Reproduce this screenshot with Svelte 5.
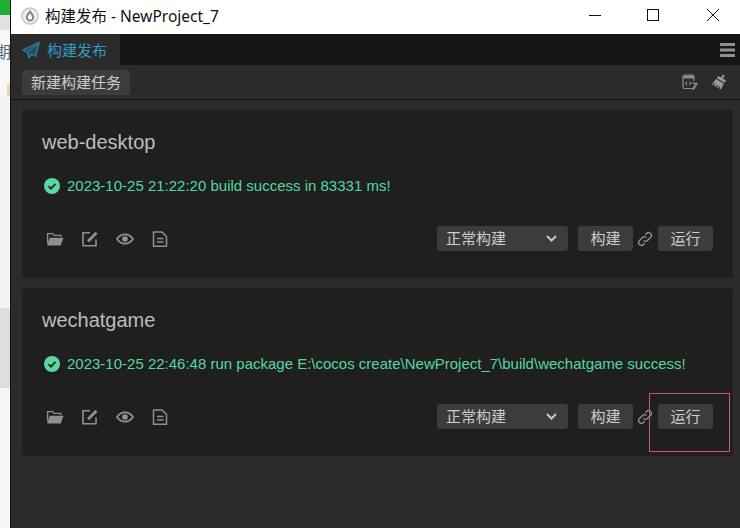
<script>
  const cards = [
    { name: 'web-desktop', msg: '2023-10-25 21:22:20 build success in 83331 ms!' },
    { name: 'wechatgame', msg: '2023-10-25 22:46:48 run package E:\\cocos create\\NewProject_7\\build\\wechatgame success!', marked: true }
  ];
</script>

<div class="screen">
  <aside class="strip">
    <div class="s-green"></div>
    <div class="s-grey1"></div>
    <div class="s-text"><span>期</span></div>
    <div class="s-tan"></div>
    <div class="s-light"></div>
    <div class="s-grey"></div>
    <div class="s-rest"></div>
  </aside>
  <main class="window">
    <header class="titlebar">
      <svg class="logo" width="18" height="18" viewBox="0 0 18 18">
        <circle cx="9" cy="9" r="8" fill="#efefef" stroke="#c4c4c4" stroke-width="1.500" />
        <path d="M9 2.800C7.300 5.500 4.800 7.500 4.800 10.400a4.200 4.200 0 0 0 8.400 0C13.200 7.500 10.700 5.500 9 2.800z" fill="#8a8a8a" />
        <path d="M9 6.500C8.100 8 6.900 9 6.900 10.500a2.100 2.100 0 0 0 4.200 0C11.100 9 9.900 8 9 6.500z" fill="#fff" />
      </svg>
      <span class="wintitle">构建发布 - NewProject_7</span>
      <div class="winctl">
        <svg width="14" height="14" viewBox="0 0 14 14"><path d="M1 7.500h12" stroke="#111" /></svg>
        <svg width="14" height="14" viewBox="0 0 14 14"><rect x="0.500" y="1.500" width="11" height="11" fill="none" stroke="#111" /></svg>
        <svg width="14" height="14" viewBox="0 0 14 14"><path d="M1 1l12 12M13 1L1 13" stroke="#111" /></svg>
      </div>
    </header>
    <nav class="tabs">
      <div class="tab">
        <svg width="18" height="18" viewBox="0 0 18 18"><path d="M17 1.500L1 9l4.500 2.300L7 16.500l2.700-3.500 3.800 2.200z" fill="#24495a" stroke="#2b7590" stroke-width="1.800" stroke-linejoin="round" /><path d="M16.500 2L6 11" stroke="#2b7590" stroke-width="1.500" /></svg>
        <span>构建发布</span>
      </div>
      <svg class="burger" width="15" height="14" viewBox="0 0 15 14"><path d="M0 0h15v3H0zM0 5.500h15v3H0zM0 11h15v3H0z" fill="#8f8f8f" /></svg>
    </nav>
    <div class="toolbar">
      <button class="btn new">新建构建任务</button>
      <div class="tools">
        <svg width="16" height="16" viewBox="0 0 16 16" fill="none" stroke="#8c8c8c" stroke-width="1.200">
          <path d="M10.500 14.500H2.500a1.500 1.500 0 0 1-1.500-1.500V3a2 2 0 0 1 2-2h7a2 2 0 0 1 2 2v4" />
          <path d="M1.500 3h10.500" stroke-width="3" />
          <path d="M5 7.500L3.700 9.200 5 10.900M7.500 7.500L8.800 9.200 7.500 10.900" />
          <path d="M15 9l-4.200 6.500" stroke-width="2.200" />
          <path d="M10.500 9l4.800 1" stroke-width="1.600" />
        </svg>
        <svg width="17" height="17" viewBox="0 0 17 17" fill="#999">
          <path d="M11.800 0.500l1.900 1.100-1.800 3.100 3.100 1.800-1.300 2.300-7.900-4.600 1.300-2.300 3 1.700z" />
          <path d="M4.900 5l8 4.600-3 5.900-1.700-1 .9-2-.9-.5-1.100 2-1.400-.8 1.100-2-.9-.5-1.100 2-1.500-.9 1-2-.9-.5-1.200 1.900-1.200-.8z" />
        </svg>
      </div>
    </div>
    <section class="content">
      {#each cards as card}
        <article class="card">
          <h2>{card.name}</h2>
          <p class="msg">
            <svg width="16" height="16" viewBox="0 0 16 16"><circle cx="8" cy="8" r="8" fill="#5dd6a0" /><path d="M4.500 8.200l2.400 2.400 4.600-4.800" fill="none" stroke="#1f2a26" stroke-width="1.800" /></svg>
            <span>{card.msg}</span>
          </p>
          <div class="actions">
            <div class="icons">
              <svg width="18" height="16" viewBox="0 0 18 16">
                <path d="M1.600 12V2.600h5l1.500 1.800h6.800V6" fill="none" stroke="#8f8f8f" stroke-width="1.400" />
                <path d="M1 14.500l2.800-7.700h13.700l-2.800 7.700z" fill="#8f8f8f" />
              </svg>
              <svg width="16" height="16" viewBox="0 0 16 16" fill="none" stroke="#909090" stroke-width="1.600">
                <path d="M8 1.800H1v13h13V8.500" /><path d="M6 10.200L14.500 1.800" stroke-width="2.800" />
              </svg>
              <svg width="18" height="16" viewBox="0 0 18 16">
                <path d="M1 8c2-3 4.800-4.600 8-4.600S15 5 17 8c-2 3-4.800 4.600-8 4.600S3 11 1 8z" fill="none" stroke="#959595" stroke-width="1.600" />
                <circle cx="9" cy="8" r="2.800" fill="#959595" />
              </svg>
              <svg width="16" height="16" viewBox="0 0 16 16" fill="none" stroke="#909090" stroke-width="1.500">
                <path d="M1.500 1h8.500l4.500 4.500v9.800H1.500z" stroke-linejoin="round" /><path d="M5 7.500h6.500M5 11h6.500" />
              </svg>
            </div>
            <div class="controls">
              <div class="select"><span>正常构建</span>
                <svg width="11" height="7" viewBox="0 0 11 7"><path d="M1 1l4.500 4.500L10 1" fill="none" stroke="#c8c8c8" stroke-width="2" /></svg>
              </div>
              <button class="btn act">构建</button>
              <svg class="link" width="16" height="16" viewBox="0 0 16 16" fill="none" stroke="#909090" stroke-width="1.400">
                <path d="M6.500 9.500a2.800 2.800 0 0 0 4 0l3-3a2.800 2.800 0 0 0-4-4L8.300 3.700" />
                <path d="M9.500 6.500a2.800 2.800 0 0 0-4 0l-3 3a2.800 2.800 0 0 0 4 4l1.200-1.200" />
              </svg>
              <button class="btn act">运行</button>
              {#if card.marked}<div class="mark"></div>{/if}
            </div>
          </div>
        </article>
      {/each}
    </section>
  </main>
</div>

<style>
  :global(body) { margin: 0; background: #2b2b2b; }
  .screen {
    display: flex;
    width: 740px;
    height: 528px;
    overflow: hidden;
    font-family: "Liberation Sans", "Noto Sans CJK SC", sans-serif;
  }
  .strip { width: 10px; display: flex; flex-direction: column; flex: none; overflow: hidden; background: #f2f2f2; }
  .s-green { height: 15px; background: #1fae2f; flex: none; }
  .s-grey1 { height: 15px; background: #e2e2e2; flex: none; }
  .s-text { height: 54px; background: #f7f7f7; flex: none; position: relative; overflow: hidden; }
  .s-text span { position: absolute; top: 12px; right: -1px; font-size: 16px; line-height: 22px; color: #4a6a80; }
  .s-tan { height: 12px; background: linear-gradient(90deg, #f7f7f7 75%, #e8d8a8 75%); flex: none; }
  .s-light { height: 212px; background: #f4f4f4; flex: none; }
  .s-grey { height: 80px; background: #dedede; flex: none; }
  .s-rest { flex: 1; background: #f6f6f6; }
  .window { flex: 1; display: flex; flex-direction: column; border-left: 1px solid #111; min-width: 0; background: #2b2b2b; }
  .titlebar { height: 34px; flex: none; background: #fff; display: flex; align-items: center; box-sizing: border-box; padding: 0 0 2px 10px; }
  .logo { margin-right: 6px; }
  .wintitle { font-size: 15.500px; color: #111; flex: 1; white-space: nowrap; font-family: "Noto Sans", "Noto Sans CJK SC", sans-serif; margin-bottom: 2px; }
  .winctl { display: flex; gap: 45px; margin: 0 20px 2px 0; }
  .winctl svg { display: block; }
  .tabs { height: 31px; flex: none; background: #151515; display: flex; justify-content: space-between; align-items: center; padding-right: 5px; }
  .tab { width: 109px; height: 31px; background: #2b2b2b; display: flex; align-items: center; gap: 7px; padding-left: 11px; box-sizing: border-box; color: #2e9cc9; font-size: 15px; }
  .toolbar { height: 35px; flex: none; box-sizing: border-box; border-bottom: 1px solid #111; display: flex; align-items: center; justify-content: space-between; padding: 0 12px 0 11px; }
  .tools { display: flex; gap: 13px; align-items: center; }
  .btn { border: 0; border-radius: 3px; background: #3c3c3c; color: #ccc; font: inherit; font-size: 15px; padding: 0 0 2px; box-sizing: border-box; }
  .new { width: 108px; height: 25px; }
  .content { flex: 1; padding: 10px 7px 0 11px; display: flex; flex-direction: column; gap: 10px; }
  .card { height: 168px; box-sizing: border-box; background: #1f1f1f; border-radius: 3px; padding: 19px 20px 0; display: flex; flex-direction: column; }
  h2 { margin: 0; font-size: 20px; font-weight: 400; color: #bdbdbd; line-height: 26px; }
  .msg { margin: 21px 0 0; display: flex; align-items: center; gap: 7px; padding-left: 2px; color: #55d7a0; font-size: 15px; line-height: 20px; white-space: nowrap; }
  .actions { margin-top: 30px; display: flex; justify-content: space-between; align-items: center; }
  .icons { display: flex; gap: 18px; margin-left: 4px; }
  .controls { position: relative; display: flex; align-items: center; }
  .select { width: 131px; height: 25px; box-sizing: border-box; background: #3c3c3c; border-radius: 3px; color: #ccc; font-size: 15px; display: flex; align-items: center; justify-content: space-between; padding: 0 11px 2px 9px; margin-right: 10px; }
  .select svg { margin-top: 2px; }
  .act { width: 55px; height: 25px; }
  .link { margin: 0 5px 0 4px; }
  .mark { position: absolute; left: 212px; top: -11px; width: 79px; height: 57px; border: 1px solid #d9534f; }
</style>
